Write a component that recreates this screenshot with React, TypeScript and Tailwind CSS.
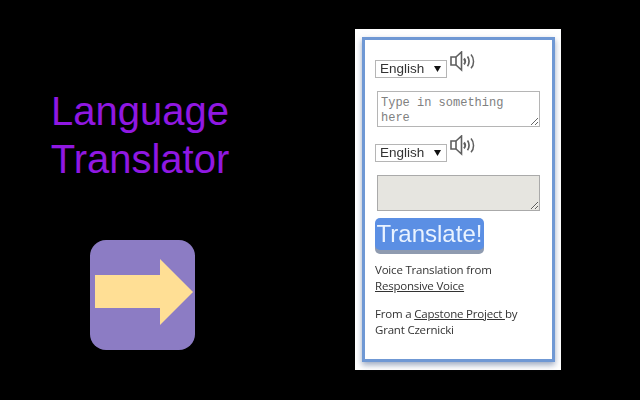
const Speaker = () => (
  <svg width="26" height="21" viewBox="0 0 26 21" fill="none" stroke="#5f5f5f" strokeWidth="1.600" className="shrink-0">
    <path d="M1 6h5v8H1z" fill="#fff" />
    <path d="M6 6 11.500 1v18L6 14" />
    <path d="M14 7.500c1.300 1.600 1.300 4.200 0 5.800" strokeWidth="2" />
    <path d="M17.500 5.500c2.100 2.700 2.100 7 0 9.700" strokeWidth="1.700" />
    <path d="M21 3.500c3.400 3.800 3.400 10 0 13.800" strokeWidth="1.500" />
  </svg>
);

const LangRow = () => (
  <div className="flex items-start gap-[3px]">
    <div className="relative mt-[9px] h-[18px] w-[72px]">
      <select className="block h-full w-full appearance-none border border-[#b5b5b5] bg-white pl-[4px] font-['Liberation_Sans',sans-serif] text-[13.5px] leading-none text-[#333]">
        <option>English</option>
      </select>
      <svg width="7" height="6" viewBox="0 0 7 6" className="pointer-events-none absolute left-[59px] top-[6px]">
        <path d="M0 0h7L3.500 6z" fill="#111" />
      </svg>
    </div>
    <Speaker />
  </div>
);

export default function App() {
  return (
    <div className="flex h-[400px] w-[640px] overflow-hidden bg-black font-['Open_Sans',sans-serif] blur-[0.4px]">
      <div className="flex w-[280px] flex-col items-center pt-[87px]">
        <h1 className="text-center font-['Liberation_Sans',sans-serif] text-[40px] leading-[48px] text-[#9018e2]">
          Language
          <br />
          Translator
        </h1>
        <div className="relative mt-[57px] ml-[4px] h-[110px] w-[105px] rounded-[16px] bg-[#8c7cc4]">
          <svg width="98" height="66" viewBox="0 0 98 66" className="absolute left-[5px] top-[19px]">
            <path d="M0 16h65V0l33 33-33 33V49H0z" fill="#ffdf95" />
          </svg>
        </div>
      </div>
      <div className="ml-[75px] mt-[29px] h-[341px] w-[206px] bg-white pb-[8px] pl-[7px] pr-[6px] pt-[8px]">
        <div className="flex h-full flex-col border-[3px] border-[#6f98d4] pl-[10px] pt-[11px] shadow-[0_3px_6px_rgba(90,110,150,0.6)]">
          <LangRow />
          <textarea
            readOnly
            placeholder="Type in something here"
            className="mt-[13px] ml-[2px] h-[36px] w-[163px] border border-[#b5b5b5] bg-white py-[4px] pl-[3px] pr-[3px] font-['Liberation_Mono',monospace] text-[12px] leading-[15px] placeholder:text-[#808080]"
          />
          <div className="mt-[8px]">
            <LangRow />
          </div>
          <textarea
            readOnly
            className="mt-[13px] ml-[2px] h-[36px] w-[163px] border border-[#aaa] bg-[#e6e5e0]"
          />
          <button className="mt-[7px] h-[32px] w-[109px] rounded-[5px] bg-[#5b8fe4] font-['Liberation_Sans',sans-serif] text-[24px] leading-[30px] text-[#eaf3ff] shadow-[0_4px_0_#8f9bb0]">
            Translate!
          </button>
          <p className="mt-[12px] text-[11.5px] leading-[16px] tracking-[-0.2px] text-[#333]">
            Voice Translation from
            <br />
            <a className="underline">Responsive Voice</a>
          </p>
          <p className="mt-[12px] text-[11.5px] leading-[16px] tracking-[-0.2px] text-[#333]">
            From a <a className="underline">Capstone Project </a>by
            <br />
            Grant Czernicki
          </p>
        </div>
      </div>
    </div>
  );
}
